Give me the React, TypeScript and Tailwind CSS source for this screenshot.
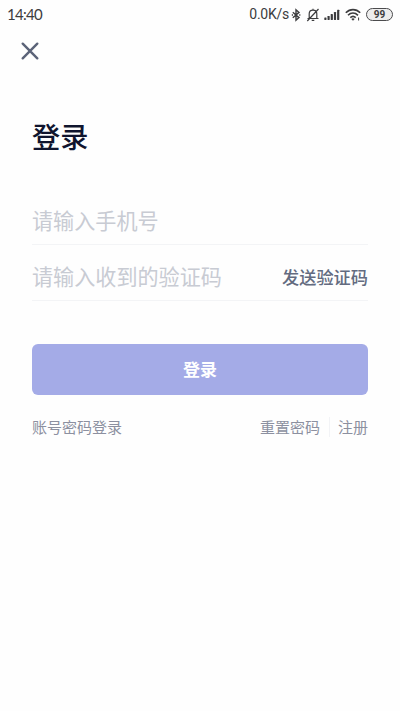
import React from "react";

function StatusBar() {
  return (
    <header className="flex h-7 items-center pt-px pl-[7px] pr-[7px] text-[#3c3c3e]">
      <time className="pb-px font-[Lato,sans-serif] text-[15px] leading-5 tracking-[-0.7px]">14:40</time>
      <span className="ml-auto pb-px font-[Roboto,sans-serif] text-[14px] leading-5 tracking-[-0.25px]">0.0K/s</span>
      <svg className="ml-[2px] h-[14px] w-[10px]" viewBox="0 0 10 14" fill="none" stroke="currentColor" strokeWidth="1.4">
        <path d="M1.8 4.2 8 9.600 5 12.300V1.700L8 4.400 1.800 9.800" />
        <path d="M.8 7h1.200M8.200 7h1.200" strokeWidth="1.5" />
      </svg>
      <svg className="ml-[5px] h-[14px] w-[14px]" viewBox="0 0 14 14" fill="none" stroke="currentColor" strokeWidth="1.200">
        <path d="M1.500 10.500h11M3.200 10V5.800C3.200 3.600 4.800 2.100 7 2.100s3.800 1.500 3.800 3.700V10M7 2V.8M5.700 12.400h2.600M12.500 1 1.300 13" />
      </svg>
      <svg className="ml-[4px] h-[12px] w-[16px]" viewBox="0 0 16 12" fill="currentColor">
        <rect x="0.3" y="8.6" width="2.2" height="2.4" rx=".4" />
        <rect x="3.5" y="7" width="2.2" height="4" rx=".4" />
        <rect x="6.7" y="5" width="2.2" height="6" rx=".4" />
        <rect x="9.9" y="3" width="2.2" height="8" rx=".4" />
        <rect x="13.1" y="0.8" width="2.2" height="10.2" rx=".4" />
      </svg>
      <svg className="ml-[5px] h-[13px] w-[17px]" viewBox="0 0 17 13" fill="none" stroke="currentColor" strokeWidth="1.6">
        <path d="M.8 4.800C5 .5 11 .5 15.200 4.800M3 7.300c2.900-2.900 7-2.900 10 0M5.300 9.700c1.600-1.500 3.800-1.500 5.400 0" />
        <path d="m6.300 11 1.700 1.700L9.700 11c-1-.9-2.400-.9-3.400 0Z" fill="currentColor" stroke="none" />
        <path d="M13.600 9.500v3" strokeWidth="1" />
      </svg>
      <span className="ml-[4px] flex h-[13px] w-[27px] items-center justify-center rounded-full border-[1.5px] border-[#4b4b4d] bg-[#ededed] font-[Roboto,sans-serif] text-[10px] font-bold leading-none">
        99
      </span>
    </header>
  );
}

export default function App() {
  return (
    <div className="flex min-h-[711px] w-[400px] flex-col bg-[#fefefe] font-['Noto_Sans_CJK_SC',sans-serif]" lang="zh-CN">
      <StatusBar />
      <button className="mt-[14px] ml-[21px] size-[18px]" aria-label="关闭">
        <svg viewBox="0 0 18 18" fill="none" stroke="#5b6378" strokeWidth="2.400" strokeLinecap="round">
          <path d="m1.700 1.700 14.600 14.600M16.300 1.700 1.700 16.300" />
        </svg>
      </button>

      <main className="flex flex-col px-8">
        <h1 className="mt-[56px] text-[28.2px] font-medium leading-10 text-[#10152e]">登录</h1>

        <form className="mt-[41px] flex flex-col">
          <div className="flex h-[48px] items-center border-b border-[#f3f4f6] pb-[2px]">
            <span className="text-[21.1px] font-normal leading-8 text-[#c8cbd3]">请输入手机号</span>
          </div>
          <div className="flex h-[56px] items-center justify-between border-b border-[#f3f4f6] pt-[7px]">
            <span className="text-[21.1px] font-normal leading-8 text-[#c8cbd3]">请输入收到的验证码</span>
            <button type="button" className="pt-[2px] text-[17.2px] font-medium leading-6 text-[#636b80]">发送验证码</button>
          </div>
          <button type="button" className="mt-[43px] h-[51px] rounded-[6px] bg-[#a4abe7] pb-[2px] text-[17px] font-bold leading-6 text-white">
            登录
          </button>
        </form>

        <nav className="mt-[21px] flex h-[22px] items-center text-[15px] font-normal leading-[22px] text-[#8c90a0]">
          <a>账号密码登录</a>
          <a className="ml-auto">重置密码</a>
          <span className="mr-[8px] ml-[9px] h-5 w-px bg-[#f2f3f6]" />
          <a>注册</a>
        </nav>
      </main>
    </div>
  );
}
